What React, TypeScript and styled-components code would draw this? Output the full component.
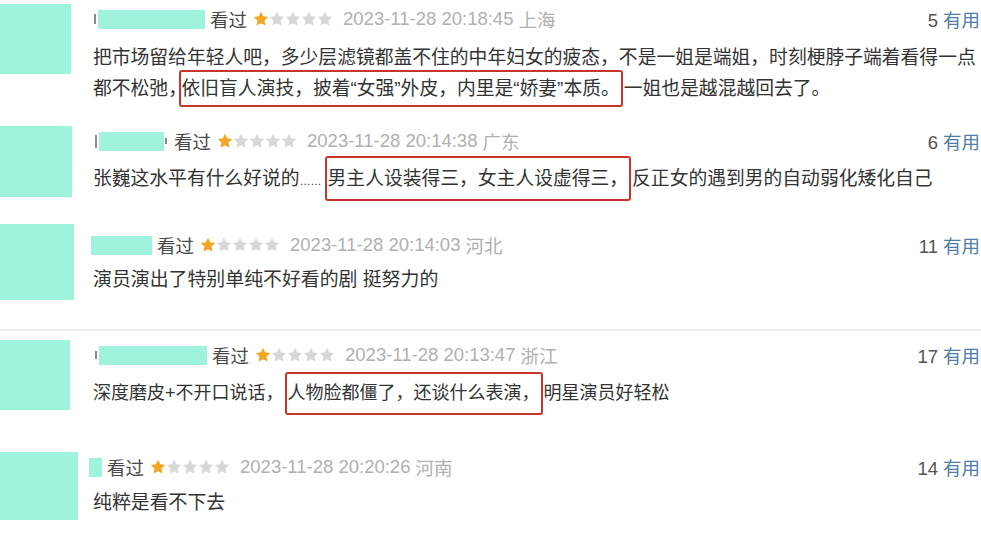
import React from "react";
import styled, { createGlobalStyle } from "styled-components";

const GlobalStyle = createGlobalStyle`
  html, body {
    margin: 0;
    padding: 0;
    background: #fff;
  }
  body {
    width: 981px;
    height: 543px;
    overflow: hidden;
    font-family: "Liberation Sans", "Noto Sans CJK SC", sans-serif;
  }
`;

const List = styled.div`
  display: flex;
  flex-direction: column;
  width: 981px;
`;

const Item = styled.div<{ $h: number; $pad: number; $divider?: boolean }>`
  display: flex;
  align-items: flex-start;
  box-sizing: border-box;
  height: ${(p) => p.$h}px;
  padding-top: ${(p) => p.$pad}px;
  border-bottom: ${(p) => (p.$divider ? "2px solid #ededed" : "none")};
`;

const AvatarCol = styled.div`
  width: 93px;
  flex-shrink: 0;
`;

const Avatar = styled.div<{ $w: number; $h: number }>`
  width: ${(p) => p.$w}px;
  height: ${(p) => p.$h}px;
  background: #9ff4dc;
`;

const Body = styled.div`
  flex: 1;
  display: flex;
  flex-direction: column;
  padding-right: 1px;
  min-width: 0;
`;

const Meta = styled.div<{ $top: number }>`
  display: flex;
  align-items: center;
  height: 28px;
  margin-top: ${(p) => p.$top}px;
  font-size: 18.5px;
  white-space: nowrap;
`;

const Name = styled.div<{ $shift: number }>`
  display: flex;
  align-items: center;
  margin-left: ${(p) => p.$shift}px;
`;

// leftover bit of a cropped username glyph
const Stub = styled.span<{ $h: number }>`
  display: inline-block;
  width: 2px;
  height: ${(p) => p.$h}px;
  margin: 0 2px 0 1px;
  background: #8a8a8a;
`;

const NameMask = styled.span<{ $w: number }>`
  display: inline-block;
  width: ${(p) => p.$w}px;
  height: 19px;
  background: #9ff2dc;
`;

const Watched = styled.span`
  margin-left: 5px;
  color: #4a4a4a;
`;

const Stars = styled.span`
  display: inline-flex;
  margin-left: 6px;
`;

const DateText = styled.span`
  margin-left: 10px;
  color: #b0b0b0;
`;

const Location = styled.span`
  margin-left: 5px;
  color: #b0b0b0;
`;

const Useful = styled.span`
  margin-left: auto;
  color: #555;
`;

const UsefulLabel = styled.span`
  margin-left: 5px;
  color: #4f7ea6;
`;

const Content = styled.div<{ $top: number; $fs: number }>`
  margin-top: ${(p) => p.$top}px;
  font-size: ${(p) => p.$fs}px;
  line-height: 30px;
  color: #333;
  white-space: nowrap;
`;

const Mark = styled.span<{ $lh: number }>`
  display: inline-block;
  line-height: ${(p) => p.$lh}px;
  margin: ${(p) => -(p.$lh + 4 - 30) / 2}px 1px;
  padding: 0 1px;
  border: 2px solid #c8352d;
  border-radius: 3px;
`;

const HalfComma = styled.span`
  font-feature-settings: "halt";
`;

const Dots = styled.span`
  font-size: 11px;
  margin-right: 2px;
`;

const Star = ({ on }: { on: boolean }) => (
  <svg width="16" height="16" viewBox="0 0 24 24">
    <path
      d="M12 1.2l3.3 6.8 7.5 1.05-5.45 5.25 1.35 7.4L12 18.2l-6.7 3.5 1.35-7.4L1.2 9.05l7.5-1.05z"
      fill={on ? "#f5a524" : "#d8d8d8"}
    />
  </svg>
);

interface Review {
  h: number;
  pad: number;
  avatar: [number, number];
  metaTop: number;
  shift: number;
  lead?: number;
  nameW: number;
  tail?: number;
  date: string;
  loc: string;
  useful: number;
  divider?: boolean;
  textTop: number;
  fs: number;
  body: React.ReactNode;
}

const reviews: Review[] = [
  {
    h: 115,
    pad: 4,
    avatar: [71, 70],
    metaTop: 1,
    shift: 0,
    lead: 10,
    nameW: 107,
    date: "2023-11-28 20:18:45",
    loc: "上海",
    useful: 5,
    textTop: 10,
    fs: 18.8,
    body: (
      <>
        把市场留给年轻人吧，多少层滤镜都盖不住的中年妇女的疲态，不是一姐是端姐，时刻梗脖子端着看得一点
        <br />
        都不松弛<HalfComma>，</HalfComma>
        <Mark $lh={33}>依旧盲人演技，披着“女强”外皮，内里是“娇妻”本质。</Mark>
        一姐也是越混越回去了。
      </>
    ),
  },
  {
    h: 105,
    pad: 11,
    avatar: [72, 71],
    metaTop: 1,
    shift: 1,
    lead: 13,
    nameW: 65,
    tail: 6,
    date: "2023-11-28 20:14:38",
    loc: "广东",
    useful: 6,
    textTop: 8,
    fs: 18.8,
    body: (
      <>
        张巍这水平有什么好说的<Dots>……</Dots>
        <Mark $lh={41}>男主人设装得三，女主人设虚得三，</Mark>
        反正女的遇到男的自动弱化矮化自己
      </>
    ),
  },
  {
    h: 111,
    pad: 4,
    avatar: [74, 76],
    metaTop: 7,
    shift: -2,
    nameW: 61,
    date: "2023-11-28 20:14:03",
    loc: "河北",
    useful: 11,
    divider: true,
    textTop: 6,
    fs: 18.9,
    body: <>演员演出了特别单纯不好看的剧 挺努力的</>,
  },
  {
    h: 109,
    pad: 9,
    avatar: [70, 70],
    metaTop: 1,
    shift: 1,
    lead: 8,
    nameW: 108,
    date: "2023-11-28 20:13:47",
    loc: "浙江",
    useful: 17,
    textTop: 9,
    fs: 18,
    body: (
      <>
        深度磨皮+不开口说话，
        <Mark $lh={39}>人物脸都僵了，还谈什么表演，</Mark>
        明星演员好轻松
      </>
    ),
  },
  {
    h: 103,
    pad: 12,
    avatar: [78, 68],
    metaTop: 1,
    shift: -4,
    nameW: 13,
    date: "2023-11-28 20:20:26",
    loc: "河南",
    useful: 14,
    textTop: 7,
    fs: 18.9,
    body: <>纯粹是看不下去</>,
  },
];

export default function App() {
  return (
    <>
      <GlobalStyle />
      <List>
        {reviews.map((r, i) => (
          <Item key={i} $h={r.h} $pad={r.pad} $divider={r.divider}>
            <AvatarCol>
              <Avatar $w={r.avatar[0]} $h={r.avatar[1]} />
            </AvatarCol>
            <Body>
              <Meta $top={r.metaTop}>
                <Name $shift={r.shift}>
                  {r.lead && <Stub $h={r.lead} />}
                  <NameMask $w={r.nameW} />
                  {r.tail && <Stub $h={r.tail} />}
                </Name>
                <Watched>看过</Watched>
                <Stars>
                  {[0, 1, 2, 3, 4].map((s) => (
                    <Star key={s} on={s === 0} />
                  ))}
                </Stars>
                <DateText>{r.date}</DateText>
                <Location>{r.loc}</Location>
                <Useful>
                  {r.useful}
                  <UsefulLabel>有用</UsefulLabel>
                </Useful>
              </Meta>
              <Content $top={r.textTop} $fs={r.fs}>
                {r.body}
              </Content>
            </Body>
          </Item>
        ))}
      </List>
    </>
  );
}
